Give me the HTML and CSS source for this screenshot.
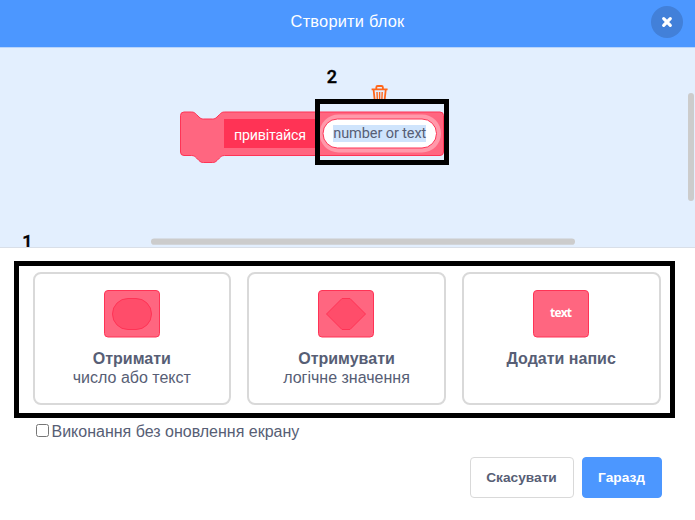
FILE: index.html
```html
<!DOCTYPE html>
<html lang="uk">
<head>
<meta charset="utf-8">
<title>Створити блок</title>
<link rel="stylesheet" href="styles.css">
</head>
<body>
<div class="modal">
  <header class="header">
    <h1 class="title">Створити блок</h1>
    <button class="close" aria-label="Закрити">
      <svg width="12" height="12" viewBox="0 0 12 12"><path d="M2.7 2.7L9.3 9.3M9.3 2.7L2.7 9.3" stroke="#fff" stroke-width="3.2" stroke-linecap="round"/></svg>
    </button>
  </header>
  <section class="workspace">
    <svg class="canvas" width="695" height="199" viewBox="0 48 695 199">
      <g fill="none" stroke="#ff661a" stroke-width="1.8" stroke-linejoin="round">
        <path d="M371.6 89.300H387.600M376.300 89V87.400Q376.300 86 377.700 86H381.500Q382.900 86 382.900 87.400V89M373.600 90L374.800 101H384.500L385.700 90"/>
        <path d="M377 92L377.300 99M379.600 92V99M382.200 92L381.900 99" stroke-width="1.4"/>
      </g>
      <path d="M180.500 115.500a3.500 3.500 0 0 1 3.500-3.500H191.500C194 112 195 113 196.500 114.500L199 117C200.500 118.500 201.500 119 203.500 119H212.500C214.500 119 215.500 118.500 217 117L219.500 114.500C221 113 222 112 224.500 112H440a3.500 3.500 0 0 1 3.500 3.500V152a3.500 3.500 0 0 1-3.500 3.500H224.500C222 155.500 221 156.500 219.500 158L217 160.500C215.500 162 214.500 162.500 212.500 162.500H203.500C201.500 162.500 200.500 162 199 160.500L196.500 158C195 156.500 194 155.500 191.500 155.500H184a3.500 3.500 0 0 1-3.500-3.500Z" fill="#ff6680" stroke="#ff3355"/>
      <rect x="224" y="119" width="94" height="29" fill="#ff3355"/>
      <text class="label" x="234" y="139.500" textLength="72">привітайся</text>
      <rect x="319.500" y="114.500" width="121.500" height="38" rx="19" fill="#ff99aa"/>
      <rect x="323" y="119" width="113.500" height="29" rx="14.500" fill="#fff" stroke="#ff3355"/>
      <rect x="333" y="125" width="93" height="17" fill="#cfe4fc"/>
      <text class="value" x="333.300" y="137.500" textLength="93">number or text</text>
      <rect x="688" y="93" width="6" height="108" rx="3" fill="#ccc"/>
      <rect x="151" y="238.500" width="424" height="6.300" rx="3.100" fill="#ccc"/>
      <text class="step" x="22.200" y="248.300">1</text>
      <text class="step" x="326.800" y="83">2</text>
    </svg>
  </section>
  <main class="body">
    <div class="options">
      <button class="card">
        <svg width="56" height="48" viewBox="0 0 56 48"><rect x=".5" y=".5" width="55" height="46.500" rx="3.500" fill="#ff6680" stroke="#ff3355"/><rect x="8.500" y="8.500" width="39" height="31" rx="15.500" fill="#ff4d6a" stroke="#ff3355"/></svg>
        <strong>Отримати</strong>
        <span>число або текст</span>
      </button>
      <button class="card">
        <svg width="56" height="48" viewBox="0 0 56 48"><rect x=".5" y=".5" width="55" height="46.500" rx="3.500" fill="#ff6680" stroke="#ff3355"/><path d="M8.500 24L24 8.500H32L47.500 24L32 39.500H24Z" fill="#ff4d6a" stroke="#ff3355"/></svg>
        <strong>Отримувати</strong>
        <span>логічне значення</span>
      </button>
      <button class="card">
        <svg width="56" height="48" viewBox="0 0 56 48"><rect x=".5" y=".5" width="55" height="46.500" rx="3.500" fill="#ff6680" stroke="#ff3355"/><text class="icon-text" x="28" y="26.500" text-anchor="middle" textLength="22">text</text></svg>
        <strong>Додати напис</strong>
      </button>
    </div>
    <label class="check"><input type="checkbox"><span>Виконання без оновлення екрану</span></label>
    <div class="actions">
      <button class="btn cancel">Скасувати</button>
      <button class="btn ok">Гаразд</button>
    </div>
  </main>
  <div class="frame frame-input"></div>
  <div class="frame frame-options"></div>
</div>
</body>
</html>
```
FILE: styles.css
```css
* { box-sizing: border-box; }
body {
  margin: 0;
  background: #fff;
  font-family: "Liberation Sans", Arial, sans-serif;
  color: #575e75;
}
button { font-family: inherit; color: inherit; padding: 0; }
.modal { position: relative; width: 695px; height: 520px; overflow: hidden; }
.header {
  display: grid;
  grid-template-columns: 1fr auto 1fr;
  align-items: center;
  height: 48px;
  padding: 0 12px 4px;
  background: #4c97ff;
  border-bottom: 1px solid #b9d5fb;
}
.title {
  grid-column: 2;
  margin: 0;
  font-size: 16.4px;
  font-weight: 400;
  letter-spacing: .2px;
  color: #fff;
}
.close {
  grid-column: 3;
  justify-self: end;
  display: grid;
  place-items: center;
  width: 32px;
  height: 32px;
  border: 0;
  border-radius: 50%;
  background: #4280d9;
}
.workspace { height: 200px; background: #e3effe; border-bottom: 1px solid #d9dfe8; }
.canvas { display: block; }
.label { font: 14.200px Roboto, sans-serif; fill: #fff; }
.value { font: 14.500px Roboto, sans-serif; fill: #575e75; }
.step { font: 500 18px Roboto, sans-serif; fill: #000; stroke: #000; stroke-width: .4px; }
.icon-text { font: bold 12px "Open Sans", sans-serif; fill: #fff; }
.body { padding: 24px 34.500px 0 32.500px; }
.options { display: grid; grid-template-columns: repeat(3, 1fr); gap: 16px; }
.card {
  display: flex;
  flex-direction: column;
  align-items: center;
  height: 133px;
  padding-top: 16px;
  border: 2px solid #d9d9d9;
  border-radius: 8px;
  background: #fff;
  font-size: 16px;
  line-height: 19px;
}
.card strong { margin-top: 11px; font-size: 16px; white-space: nowrap; }
.card span { white-space: nowrap; }
.check { display: flex; align-items: center; gap: 3px; height: 20px; margin-top: 17px; font-size: 16px; }
.check input { width: 13px; height: 13px; margin: 0 0 4px 3px; }
.actions { display: flex; justify-content: flex-end; gap: 8px; margin: 15px -1px 0 0; }
.btn { height: 41px; border-radius: 4px; font-size: 13.700px; font-weight: 700; }
.cancel { width: 104px; background: #fff; border: 1px solid #d9d9d9; }
.ok { width: 80px; background: #4c97ff; border: 1px solid #4c97ff; color: #fff; }
.frame { position: absolute; border: 5px solid #000; pointer-events: none; }
.frame-input { left: 315px; top: 99px; width: 134px; height: 66px; }
.frame-options { left: 14px; top: 261px; width: 661px; height: 157px; }
```
